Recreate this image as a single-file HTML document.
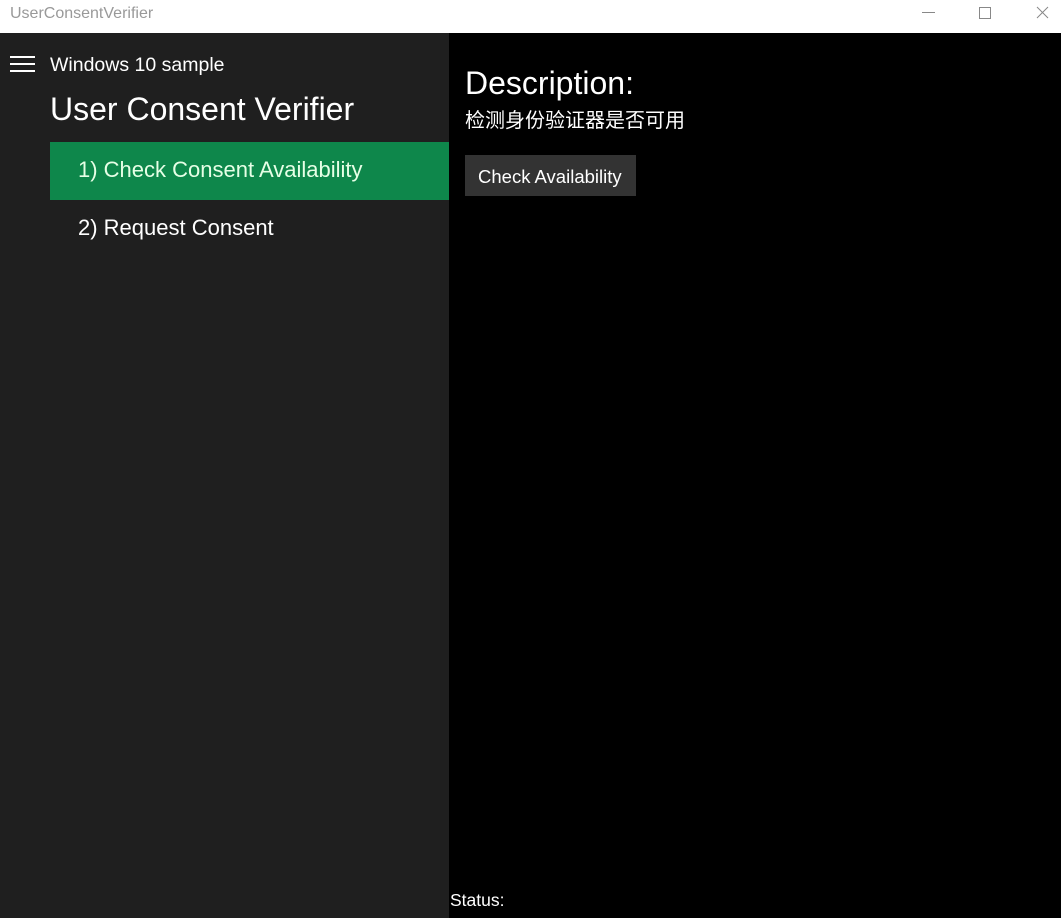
<!DOCTYPE html>
<html><head><meta charset="utf-8"><style>
*{margin:0;padding:0;box-sizing:border-box}
body{width:1061px;height:918px;overflow:hidden;background:#000;font-family:"Liberation Sans","Noto Sans CJK SC",sans-serif;color:#fff;position:relative}
.title{position:absolute;left:0;top:0;width:1061px;height:33px;background:#fff;color:#999;font-size:16px}
.title span{position:absolute;left:10px;top:5px}
.side{position:absolute;left:0;top:33px;width:449px;height:885px;background:#1f1f1f}
.ham{position:absolute;left:10px;width:25px;height:2px;background:#fff}
.t{position:absolute;white-space:nowrap}
</style></head><body>
<div class="title"><span>UserConsentVerifier</span>
<svg width="161" height="33" style="position:absolute;left:900px;top:0" fill="none" stroke="#888" stroke-width="1">
<path d="M22 12.5H35"/><rect x="79.5" y="7.5" width="11" height="11"/><path d="M137 7L148 18M148 7L137 18"/></svg></div>
<div class="side">
<div class="ham" style="top:23px"></div><div class="ham" style="top:30px"></div><div class="ham" style="top:37px"></div>
<div class="t" style="left:50px;top:21px;font-size:19.5px">Windows 10 sample</div>
<div class="t" style="left:50px;top:58px;font-size:32px">User Consent Verifier</div>
<div style="position:absolute;left:50px;top:109px;width:399px;height:58px;background:#0e874b"></div>
<div class="t" style="left:78px;top:124px;font-size:22px;color:#e6ffe6">1) Check Consent Availability</div>
<div class="t" style="left:78px;top:182px;font-size:22px">2) Request Consent</div>
</div>
<div class="t" style="left:465px;top:65px;font-size:32px">Description:</div>
<div class="t" style="left:465px;top:104px;font-size:20px">检测身份验证器是否可用</div>
<div style="position:absolute;left:465px;top:155px;width:171px;height:41px;background:#333"></div>
<div class="t" style="left:478px;top:166px;font-size:18.5px">Check Availability</div>
<div class="t" style="left:450px;top:890px;font-size:17.5px">Status:</div>
</body></html>
